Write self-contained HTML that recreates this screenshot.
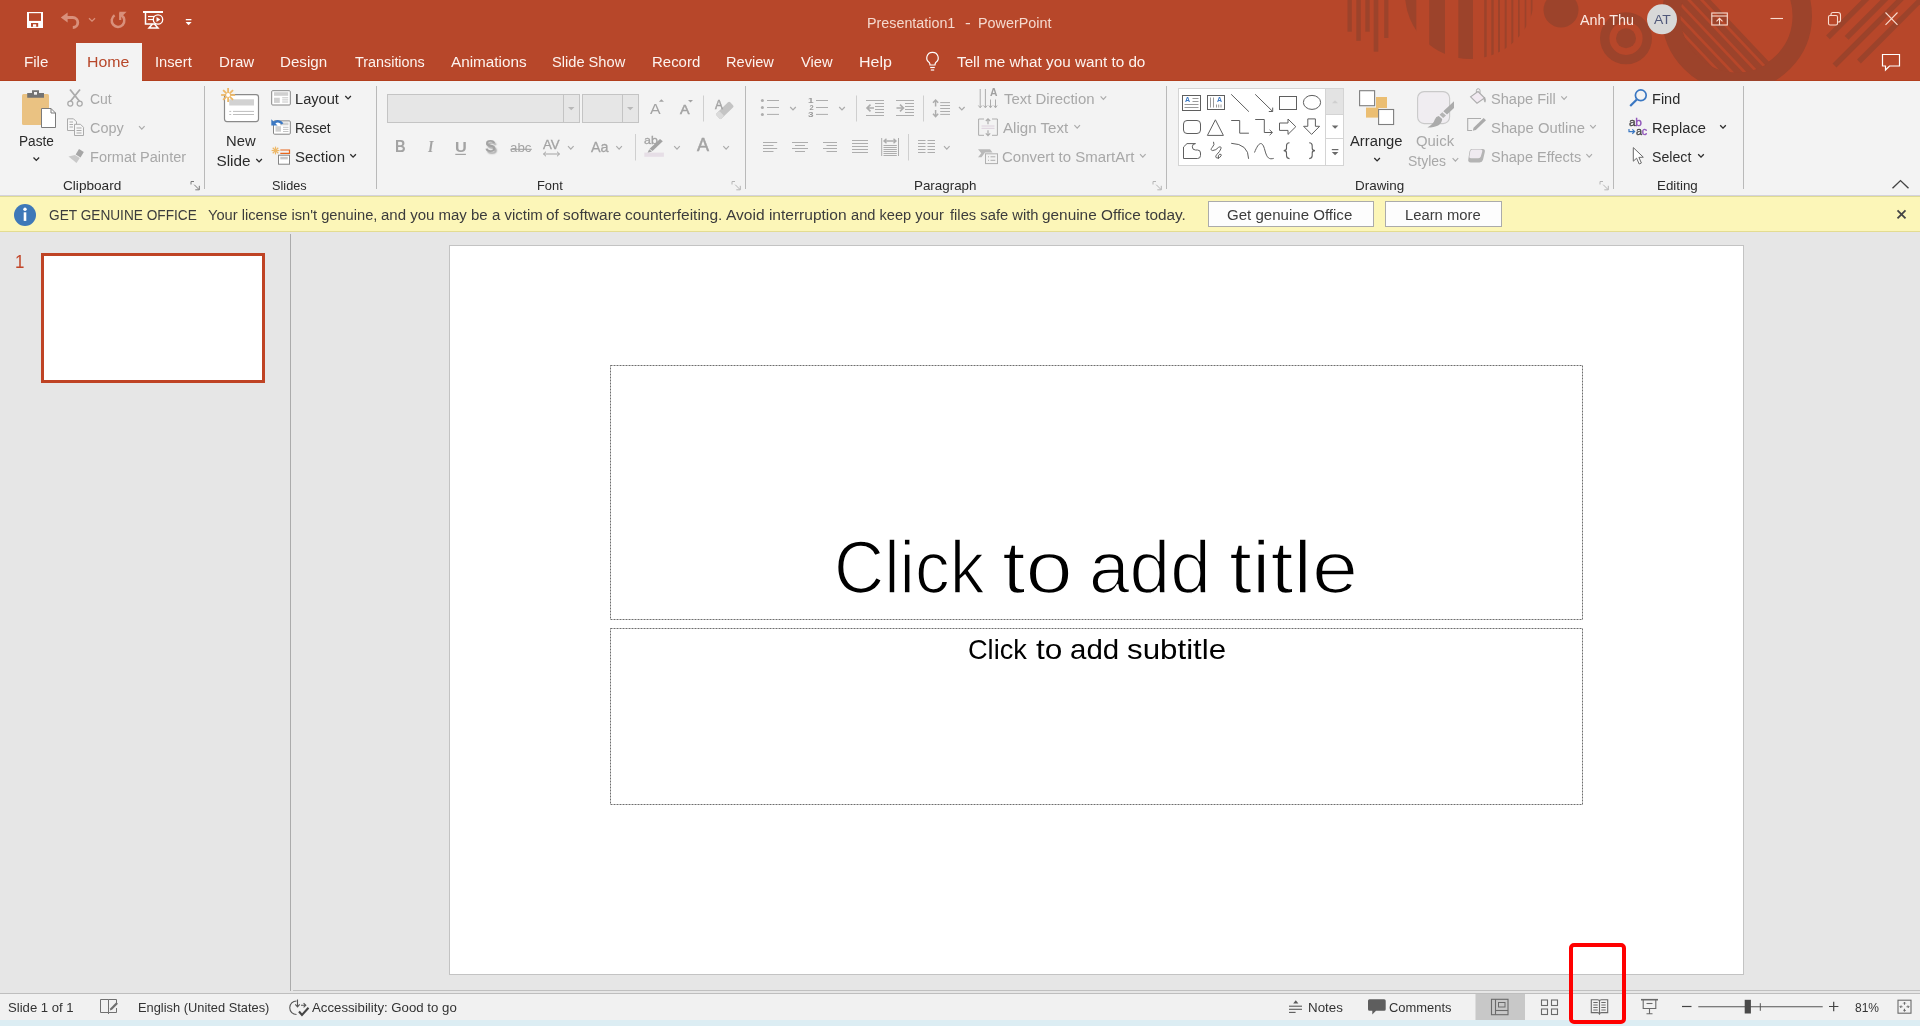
<!DOCTYPE html>
<html lang="en"><head><meta charset="utf-8"><title>Presentation1 - PowerPoint</title>
<style>
html,body{margin:0;padding:0;}
body{width:1920px;height:1026px;overflow:hidden;position:relative;background:#E6E6E6;font-family:'Liberation Sans',sans-serif;}
.b{position:absolute;}
.t{position:absolute;white-space:pre;}
svg.ov{position:absolute;left:0;top:0;}
.tx{position:absolute;left:0;top:0;width:1920px;height:1026px;will-change:transform;}
</style></head><body>
<div class="b" style="left:0px;top:0px;width:1920px;height:81px;background:#B7472A;"></div>
<div class="b" style="left:0px;top:80px;width:1920px;height:1px;background:#B23F1E;"></div>
<div class="b" style="left:0px;top:81px;width:1920px;height:114px;background:#F3F3F3;"></div>
<div class="b" style="left:76px;top:43px;width:66px;height:40px;background:#F3F3F3;"></div>
<div class="b" style="left:0px;top:195px;width:1920px;height:1px;background:#D5D3DC;"></div>
<div class="b" style="left:0px;top:196px;width:1920px;height:1px;background:#DEDA94;"></div>
<div class="b" style="left:0px;top:197px;width:1920px;height:35px;background:#FCF6B8;"></div>
<div class="b" style="left:0px;top:231px;width:1920px;height:1px;background:#E3DC92;"></div>
<div class="b" style="left:0px;top:232px;width:1920px;height:762px;background:#E6E6E6;"></div>
<div class="b" style="left:290px;top:234px;width:1px;height:757px;background:#ABABAB;"></div>
<div class="b" style="left:293px;top:990px;width:1627px;height:1px;background:#C0C0C0;"></div>
<div class="b" style="left:0px;top:993px;width:1920px;height:1px;background:#BEBEBE;"></div>
<div class="b" style="left:0px;top:994px;width:1920px;height:26px;background:#F1F1F1;"></div>
<div class="b" style="left:0px;top:1020px;width:1920px;height:6px;background:#DCEDF3;"></div>
<div class="b" style="left:41px;top:253px;width:218px;height:124px;background:#FFFFFF;border:3px solid #BF4324;"></div>
<div class="b" style="left:449px;top:245px;width:1293px;height:728px;background:#FFFFFF;border:1px solid #C3C3C3;"></div>

<svg class="ov" width="1920" height="1026" viewBox="0 0 1920 1026">
<defs><clipPath id="cT"><rect x="0" y="0" width="1920" height="81"/></clipPath><clipPath id="cSemi"><circle cx="1470" cy="-6" r="65"/></clipPath><clipPath id="cIn"><circle cx="1737" cy="16" r="56.5"/></clipPath></defs>
<g clip-path="url(#cT)" fill="#9C432B">
<rect x="1347.5" y="0" width="4.3" height="31.7" fill="#9C432B" stroke="none" stroke-width="1" rx="0"/>
<rect x="1356.3" y="0" width="4.5" height="40.8" fill="#9C432B" stroke="none" stroke-width="1" rx="0"/>
<rect x="1365.3" y="0" width="4.4" height="31.7" fill="#9C432B" stroke="none" stroke-width="1" rx="0"/>
<rect x="1373.7" y="0" width="4.6" height="51.7" fill="#9C432B" stroke="none" stroke-width="1" rx="0"/>
<rect x="1384.2" y="0" width="4.2" height="38" fill="#9C432B" stroke="none" stroke-width="1" rx="0"/>
<g clip-path="url(#cSemi)">
<rect x="1400" y="0" width="16.299999999999955" height="70" fill="#9C432B" stroke="none" stroke-width="1" rx="0"/>
<rect x="1429.2" y="0" width="15.799999999999955" height="70" fill="#9C432B" stroke="none" stroke-width="1" rx="0"/>
<rect x="1458.3" y="0" width="14.700000000000045" height="70" fill="#9C432B" stroke="none" stroke-width="1" rx="0"/>
<rect x="1484.2" y="0" width="2.5" height="70" fill="#9C432B" stroke="none" stroke-width="1" rx="0"/>
<rect x="1491.3" y="0" width="2.400000000000091" height="70" fill="#9C432B" stroke="none" stroke-width="1" rx="0"/>
<rect x="1498" y="0" width="2" height="70" fill="#9C432B" stroke="none" stroke-width="1" rx="0"/>
<rect x="1504.7" y="0" width="2.0" height="70" fill="#9C432B" stroke="none" stroke-width="1" rx="0"/>
<rect x="1511.3" y="0" width="2.0" height="70" fill="#9C432B" stroke="none" stroke-width="1" rx="0"/>
<rect x="1518" y="0" width="1.7000000000000455" height="70" fill="#9C432B" stroke="none" stroke-width="1" rx="0"/>
<rect x="1524.7" y="0" width="1.599999999999909" height="70" fill="#9C432B" stroke="none" stroke-width="1" rx="0"/>
<rect x="1530.8" y="0" width="1.7000000000000455" height="70" fill="#9C432B" stroke="none" stroke-width="1" rx="0"/>
</g>
<circle cx="1561" cy="10" r="17.5"/>
<circle cx="1626" cy="38.3" r="21.3" fill="none" stroke="#9C432B" stroke-width="9.4"/>
<circle cx="1626" cy="38.3" r="10"/>
<circle cx="1737" cy="16" r="65.25" fill="none" stroke="#9C432B" stroke-width="19.5"/>
<g clip-path="url(#cIn)">
<polygon points="1631.0,-84.2 1905.8,206.6 1760.4,343.9 1485.7,53.2"/>
<line x1="1626.4" y1="-79.8" x2="1901.1" y2="211.0" stroke="#B7472A" stroke-width="2.8"/>
<line x1="1619.7" y1="-73.4" x2="1894.4" y2="217.3" stroke="#B7472A" stroke-width="2.8"/>
<line x1="1613.0" y1="-67.1" x2="1887.7" y2="223.6" stroke="#B7472A" stroke-width="2.8"/>
<line x1="1606.3" y1="-60.8" x2="1881.1" y2="229.9" stroke="#B7472A" stroke-width="2.8"/>
<line x1="1599.6" y1="-54.5" x2="1874.4" y2="236.2" stroke="#B7472A" stroke-width="2.8"/>
<line x1="1592.9" y1="-48.2" x2="1867.7" y2="242.6" stroke="#B7472A" stroke-width="2.8"/>
</g>
<line x1="1828" y1="37.3" x2="1885.3" y2="-20" stroke="#9C432B" stroke-width="5.4"/>
<line x1="1846.6" y1="37.8" x2="1904.4" y2="-20" stroke="#9C432B" stroke-width="5.4"/>
<line x1="1834.5" y1="65.5" x2="1920" y2="-20" stroke="#9C432B" stroke-width="5.4"/>
<line x1="1859" y1="61.5" x2="1940.5" y2="-20" stroke="#9C432B" stroke-width="5.4"/>
</g>
<rect x="27" y="12" width="16" height="16" fill="#FFFFFF" stroke="none" stroke-width="1" rx="0"/>
<rect x="29" y="13.2" width="12" height="7.7" fill="#B7472A" stroke="none" stroke-width="1" rx="0"/>
<rect x="31" y="23" width="7.2" height="3.8" fill="#B7472A" stroke="none" stroke-width="1" rx="0"/>
<rect x="33" y="24.3" width="3.2" height="2.5" fill="#FFFFFF" stroke="none" stroke-width="1" rx="0"/>
<path d="M66 17.5 H72.8 A5 5 0 0 1 72.8 27.5" fill="none" stroke="#D9907B" stroke-width="2.8" />
<path d="M60.8 17.5 L67.6 12.6 V22.4 Z" fill="#D9907B" stroke="none" stroke-width="1" />
<polyline points="89,18.3 92.0,21.2 95,18.3" fill="none" stroke="#D9907B" stroke-width="1.3"/>
<path d="M121.6 15.4 A6.3 6.3 0 1 1 114.6 15.3" fill="none" stroke="#D9907B" stroke-width="2.5" />
<path d="M120.2 12.6 V20" fill="none" stroke="#D9907B" stroke-width="2.2" />
<path d="M119.2 11.8 H126.6 L121.3 17 Z" fill="#D9907B" stroke="none" stroke-width="1" />
<rect x="143" y="11" width="20" height="2" fill="#FFFFFF" stroke="none" stroke-width="1" rx="0"/>
<path d="M145.5 13 V24 H156" fill="none" stroke="#FFFFFF" stroke-width="1.5" />
<line x1="148" y1="16.5" x2="155" y2="16.5" stroke="#FFFFFF" stroke-width="1.2"/>
<line x1="148" y1="19.5" x2="153" y2="19.5" stroke="#FFFFFF" stroke-width="1.2"/>
<circle cx="158" cy="19.5" r="4.7" fill="#B7472A" stroke="#FFFFFF" stroke-width="1.3"/>
<path d="M156.5 17 L160.3 19.5 L156.5 22 Z" fill="#FFFFFF" stroke="none" stroke-width="1" />
<path d="M152.5 24 L149 28 H158 L154.5 24" fill="none" stroke="#FFFFFF" stroke-width="1.5" />
<rect x="185.8" y="19" width="5.6" height="1.3" fill="#FFFFFF" stroke="none" stroke-width="1" rx="0"/>
<path d="M185.6 22 H191.6 L188.6 25.2 Z" fill="#FFFFFF" stroke="none" stroke-width="1" />
<circle cx="1662" cy="19.3" r="15" fill="#D8D8D8"/>
<rect x="1711.8" y="13" width="15.5" height="12" fill="none" stroke="#F9DCD0" stroke-width="1.1" rx="0"/>
<line x1="1711.8" y1="16" x2="1727.3" y2="16" stroke="#F9DCD0" stroke-width="1.1"/>
<path d="M1719.5 25 V18.5 M1716.5 21.3 L1719.5 18.3 L1722.5 21.3" fill="none" stroke="#F9DCD0" stroke-width="1.1" />
<line x1="1770.5" y1="18.5" x2="1783" y2="18.5" stroke="#F9DCD0" stroke-width="1.1"/>
<rect x="1828.5" y="15.5" width="9" height="9.5" fill="none" stroke="#F9DCD0" stroke-width="1.1" rx="1.5"/>
<path d="M1831 15.5 V14.5 a2 2 0 0 1 2 -2 H1838 a2.5 2.5 0 0 1 2.5 2.5 V20 a2 2 0 0 1 -2 2 H1837.5" fill="none" stroke="#F9DCD0" stroke-width="1.1" />
<path d="M1885.5 12.5 L1897.5 24.8 M1897.5 12.5 L1885.5 24.8" fill="none" stroke="#F9DCD0" stroke-width="1.1" />
<path d="M1882.5 54.5 H1899.5 V66 H1889.5 L1885.5 70 V66 H1882.5 Z" fill="none" stroke="#FFFFFF" stroke-width="1.2" />
<path d="M932.5 52.3 a5.6 5.6 0 0 1 3.3 10.2 q-0.8 0.8 -0.8 2.5 h-5 q0 -1.7 -0.8 -2.5 a5.6 5.6 0 0 1 3.3 -10.2 Z" fill="none" stroke="#FFFFFF" stroke-width="1.2" />
<line x1="930.2" y1="67.5" x2="934.8" y2="67.5" stroke="#FFFFFF" stroke-width="1.2"/>
<line x1="930.8" y1="70" x2="934.2" y2="70" stroke="#FFFFFF" stroke-width="1.2"/>
<line x1="204.5" y1="86" x2="204.5" y2="189" stroke="#B9B9B9" stroke-width="1"/>
<line x1="376.5" y1="86" x2="376.5" y2="189" stroke="#B9B9B9" stroke-width="1"/>
<line x1="745.5" y1="86" x2="745.5" y2="189" stroke="#B9B9B9" stroke-width="1"/>
<line x1="1166.5" y1="86" x2="1166.5" y2="189" stroke="#B9B9B9" stroke-width="1"/>
<line x1="1613.5" y1="86" x2="1613.5" y2="189" stroke="#B9B9B9" stroke-width="1"/>
<line x1="1743.5" y1="86" x2="1743.5" y2="189" stroke="#B9B9B9" stroke-width="1"/>
<line x1="703.5" y1="95.5" x2="703.5" y2="121.5" stroke="#CFCFCF" stroke-width="1"/>
<line x1="635.5" y1="134" x2="635.5" y2="160.5" stroke="#CFCFCF" stroke-width="1"/>
<line x1="856.5" y1="95.5" x2="856.5" y2="121.5" stroke="#CFCFCF" stroke-width="1"/>
<line x1="923.5" y1="95.5" x2="923.5" y2="121.5" stroke="#CFCFCF" stroke-width="1"/>
<line x1="908.5" y1="134" x2="908.5" y2="160.5" stroke="#CFCFCF" stroke-width="1"/>
<path d="M191 184.5 V181.5 H194" fill="none" stroke="#7A7A7A" stroke-width="1" />
<path d="M194.2 184.7 L199 189.5 M199.3 185.8 V189.8 H195.3" fill="none" stroke="#7A7A7A" stroke-width="1" />
<path d="M732 184.5 V181.5 H735" fill="none" stroke="#B5B5B5" stroke-width="1" />
<path d="M735.2 184.7 L740 189.5 M740.3 185.8 V189.8 H736.3" fill="none" stroke="#B5B5B5" stroke-width="1" />
<path d="M1153 184.5 V181.5 H1156" fill="none" stroke="#B5B5B5" stroke-width="1" />
<path d="M1156.2 184.7 L1161 189.5 M1161.3 185.8 V189.8 H1157.3" fill="none" stroke="#B5B5B5" stroke-width="1" />
<path d="M1600 184.5 V181.5 H1603" fill="none" stroke="#B5B5B5" stroke-width="1" />
<path d="M1603.2 184.7 L1608 189.5 M1608.3 185.8 V189.8 H1604.3" fill="none" stroke="#B5B5B5" stroke-width="1" />
<rect x="22" y="94" width="27" height="31" fill="#EAC282" stroke="none" stroke-width="1" rx="1.5"/>
<path d="M27.2 93 H32 V90.2 H39 V93 H44 V97.7 H27.2 Z" fill="#737373" stroke="none" stroke-width="1" />
<rect x="34" y="92" width="3" height="2.7" fill="#F3F3F3" stroke="none" stroke-width="1" rx="0"/>
<path d="M41.5 108.5 H51 L55.5 113 V127.5 H41.5 Z" fill="#FFFFFF" stroke="#7B7B7B" stroke-width="1" />
<path d="M51 108.5 V113 H55.5" fill="none" stroke="#7B7B7B" stroke-width="1" />
<polyline points="33.5,157.5 36.3,160.4 39.1,157.5" fill="none" stroke="#2B2B2B" stroke-width="1.3"/>
<path d="M70 89.5 L79.5 101.2 M80 89.5 L70.5 101.2" fill="none" stroke="#ABABAB" stroke-width="1.8" />
<circle cx="70.3" cy="103.6" r="2.5" fill="none" stroke="#ABABAB" stroke-width="1.3"/>
<circle cx="79.7" cy="103.6" r="2.5" fill="none" stroke="#ABABAB" stroke-width="1.3"/>
<path d="M67.5 118.8 H73.5 L76.5 121.8 V130.5 H67.5 Z" fill="#F6F6F6" stroke="#ABABAB" stroke-width="1" />
<path d="M74.5 124.3 H80.5 L83.5 127.3 V135.5 H74.5 Z" fill="#F6F6F6" stroke="#ABABAB" stroke-width="1" />
<line x1="69.5" y1="122" x2="73" y2="122" stroke="#ABABAB" stroke-width="1"/>
<line x1="69.5" y1="124.5" x2="73" y2="124.5" stroke="#ABABAB" stroke-width="1"/>
<line x1="69.5" y1="127" x2="73" y2="127" stroke="#ABABAB" stroke-width="1"/>
<line x1="76.5" y1="128" x2="81.5" y2="128" stroke="#ABABAB" stroke-width="1"/>
<line x1="76.5" y1="130.5" x2="81.5" y2="130.5" stroke="#ABABAB" stroke-width="1"/>
<line x1="76.5" y1="133" x2="81.5" y2="133" stroke="#ABABAB" stroke-width="1"/>
<polyline points="139,126.2 141.8,129.1 144.6,126.2" fill="none" stroke="#ABABAB" stroke-width="1.2"/>
<path d="M79 149 L83.8 152 L80.5 157.5 L75.7 154.5 Z" fill="#A6A6A6" stroke="none" stroke-width="1" />
<path d="M75 155 L79.8 158 L76.5 163 L68.5 156.5 Z" fill="#C9C9C9" stroke="none" stroke-width="1" />
<rect x="224.5" y="94.6" width="34" height="27" fill="#FFFFFF" stroke="#8A8A8A" stroke-width="1.2" rx="2.5"/>
<rect x="229.2" y="99.3" width="24.8" height="6.2" fill="#D2D2D2" stroke="none" stroke-width="1" rx="0"/>
<line x1="233" y1="111.4" x2="254" y2="111.4" stroke="#BDBDBD" stroke-width="1"/>
<line x1="229.3" y1="111.4" x2="231.2" y2="111.4" stroke="#BDBDBD" stroke-width="1"/>
<line x1="233" y1="114.5" x2="254" y2="114.5" stroke="#BDBDBD" stroke-width="1"/>
<line x1="229.3" y1="114.5" x2="231.2" y2="114.5" stroke="#BDBDBD" stroke-width="1"/>
<line x1="221.10" y1="95.00" x2="235.10" y2="95.00" stroke="#EDB868" stroke-width="1.8"/>
<line x1="223.15" y1="90.05" x2="233.05" y2="99.95" stroke="#EDB868" stroke-width="1.8"/>
<line x1="228.10" y1="88.00" x2="228.10" y2="102.00" stroke="#EDB868" stroke-width="1.8"/>
<line x1="233.05" y1="90.05" x2="223.15" y2="99.95" stroke="#EDB868" stroke-width="1.8"/>
<circle cx="228.1" cy="95" r="2" fill="#FFFFFF"/>
<polyline points="256.3,159 259.1,161.9 261.90000000000003,159" fill="none" stroke="#2B2B2B" stroke-width="1.3"/>
<rect x="271.7" y="90.7" width="18.6" height="14.3" fill="#FFFFFF" stroke="#858585" stroke-width="1" rx="1"/>
<rect x="274" y="92.2" width="14.2" height="3.6" fill="#D0D0D0" stroke="none" stroke-width="1" rx="0"/>
<rect x="274" y="97.7" width="5.8" height="5.2" fill="#D0D0D0" stroke="none" stroke-width="1" rx="0"/>
<line x1="282.2" y1="97.8" x2="288.2" y2="97.8" stroke="#C4C4C4" stroke-width="1"/>
<line x1="282.2" y1="99.9" x2="288.2" y2="99.9" stroke="#C4C4C4" stroke-width="1"/>
<line x1="282.2" y1="102" x2="288.2" y2="102" stroke="#C4C4C4" stroke-width="1"/>
<polyline points="345.3,96 348.1,98.9 350.90000000000003,96" fill="none" stroke="#2B2B2B" stroke-width="1.3"/>
<rect x="273.5" y="120.9" width="16.8" height="13.3" fill="#FFFFFF" stroke="#858585" stroke-width="1" rx="1"/>
<rect x="275.5" y="126.2" width="5.5" height="5.5" fill="#D0D0D0" stroke="none" stroke-width="1" rx="0"/>
<rect x="280" y="122.5" width="8.5" height="2.8" fill="#D0D0D0" stroke="none" stroke-width="1" rx="0"/>
<line x1="283" y1="127.3" x2="288.5" y2="127.3" stroke="#C4C4C4" stroke-width="1"/>
<line x1="283" y1="129.4" x2="288.5" y2="129.4" stroke="#C4C4C4" stroke-width="1"/>
<line x1="283" y1="131.5" x2="288.5" y2="131.5" stroke="#C4C4C4" stroke-width="1"/>
<path d="M271.3 119.3 L271.3 125.6 L277.6 125.6 L275.4 123.4 A4.3 4.3 0 0 1 281.6 124.6 L283.4 123.2 A6.6 6.6 0 0 0 273.6 121.6 Z" fill="#3B78C3" stroke="none" stroke-width="1" />
<line x1="271.60" y1="150.50" x2="279.40" y2="150.50" stroke="#EDB868" stroke-width="1.2"/>
<line x1="272.74" y1="147.74" x2="278.26" y2="153.26" stroke="#EDB868" stroke-width="1.2"/>
<line x1="275.50" y1="146.60" x2="275.50" y2="154.40" stroke="#EDB868" stroke-width="1.2"/>
<line x1="278.26" y1="147.74" x2="272.74" y2="153.26" stroke="#EDB868" stroke-width="1.2"/>
<path d="M280.3 150 H289.5 V153.4 H280.3" fill="none" stroke="#E8671C" stroke-width="1.2" />
<rect x="278.5" y="155.2" width="11" height="9" fill="#FFFFFF" stroke="#858585" stroke-width="1" rx="0"/>
<rect x="280.3" y="156.8" width="7.5" height="2.6" fill="#C8C8C8" stroke="none" stroke-width="1" rx="0"/>
<polyline points="350.3,154.2 353.1,157.1 355.90000000000003,154.2" fill="none" stroke="#2B2B2B" stroke-width="1.3"/>
<rect x="387.5" y="94.5" width="192" height="28" fill="#E6E6E6" stroke="#C4C4C4" stroke-width="1" rx="0"/>
<line x1="563.5" y1="94.5" x2="563.5" y2="122.5" stroke="#C4C4C4" stroke-width="1"/>
<path d="M568 107 H574.5 L571.25 110.3 Z" fill="#B8B8B8" stroke="none" stroke-width="1" />
<rect x="582.5" y="94.5" width="56" height="28" fill="#E6E6E6" stroke="#C4C4C4" stroke-width="1" rx="0"/>
<line x1="622.5" y1="94.5" x2="622.5" y2="122.5" stroke="#C4C4C4" stroke-width="1"/>
<path d="M627 107 H633.5 L630.25 110.3 Z" fill="#B8B8B8" stroke="none" stroke-width="1" />
<path d="M658.9 101.8 L661.4 99.2 L664 101.8 Z" fill="#A3A3A3" stroke="none" stroke-width="1" />
<path d="M688 100 H693 L690.5 102.6 Z" fill="#A3A3A3" stroke="none" stroke-width="1" />
<g transform="translate(724.8,110.4) rotate(-44)"><rect x="-9.5" y="-3.6" width="19" height="7.2" rx="1.6" fill="#C4C4C4"/><rect x="-9.5" y="-3.6" width="5.2" height="7.2" rx="1.2" fill="#DADADA"/></g>
<line x1="455.3" y1="154.4" x2="465.9" y2="154.4" stroke="#A3A3A3" stroke-width="1.2"/>
<line x1="510.5" y1="149.3" x2="531.8" y2="149.3" stroke="#A3A3A3" stroke-width="1.1"/>
<path d="M543.5 154 H559.5 M546 151.7 L543.5 154 L546 156.3 M557 151.7 L559.5 154 L557 156.3" fill="none" stroke="#A3A3A3" stroke-width="1" />
<polyline points="568,146.2 570.8,149.1 573.6,146.2" fill="none" stroke="#ABABAB" stroke-width="1.2"/>
<polyline points="616.3,146.2 619.0999999999999,149.1 621.9,146.2" fill="none" stroke="#ABABAB" stroke-width="1.2"/>
<path d="M660 139 L662.8 141.3 L652.5 151 L649.6 148.8 Z" fill="#A3A3A3" stroke="none" stroke-width="1" />
<path d="M649.2 149.3 L652 151.5 L647.5 153 Z" fill="#A3A3A3" stroke="none" stroke-width="1" />
<rect x="644.3" y="152.6" width="19.6" height="4.2" fill="#E6DEE6" stroke="none" stroke-width="1" rx="0"/>
<polyline points="674.2,146.2 677.0,149.1 679.8000000000001,146.2" fill="none" stroke="#ABABAB" stroke-width="1.2"/>
<polyline points="723.3,146.2 726.0999999999999,149.1 728.9,146.2" fill="none" stroke="#ABABAB" stroke-width="1.2"/>
<circle cx="762.4" cy="100.5" r="1.5" fill="#ADADAD"/>
<line x1="767" y1="100.5" x2="779" y2="100.5" stroke="#ADADAD" stroke-width="1"/>
<circle cx="762.4" cy="107.5" r="1.5" fill="#ADADAD"/>
<line x1="767" y1="107.5" x2="779" y2="107.5" stroke="#ADADAD" stroke-width="1"/>
<circle cx="762.4" cy="114.4" r="1.5" fill="#ADADAD"/>
<line x1="767" y1="114.4" x2="779" y2="114.4" stroke="#ADADAD" stroke-width="1"/>
<polyline points="790.2,107 793.0,109.9 795.8000000000001,107" fill="none" stroke="#ABABAB" stroke-width="1.2"/>
<line x1="816" y1="100.5" x2="828" y2="100.5" stroke="#ADADAD" stroke-width="1"/>
<line x1="816" y1="107.5" x2="828" y2="107.5" stroke="#ADADAD" stroke-width="1"/>
<line x1="816" y1="114.4" x2="828" y2="114.4" stroke="#ADADAD" stroke-width="1"/>
<polyline points="839.2,107 842.0,109.9 844.8000000000001,107" fill="none" stroke="#ABABAB" stroke-width="1.2"/>
<line x1="866" y1="100.5" x2="884" y2="100.5" stroke="#ADADAD" stroke-width="1"/>
<line x1="875" y1="103.5" x2="884" y2="103.5" stroke="#ADADAD" stroke-width="1"/>
<line x1="875" y1="106.5" x2="884" y2="106.5" stroke="#ADADAD" stroke-width="1"/>
<line x1="875" y1="109.5" x2="884" y2="109.5" stroke="#ADADAD" stroke-width="1"/>
<line x1="875" y1="112.5" x2="884" y2="112.5" stroke="#ADADAD" stroke-width="1"/>
<line x1="866" y1="115.5" x2="884" y2="115.5" stroke="#ADADAD" stroke-width="1"/>
<path d="M874 108 H867.5 M870.5 104.6 L867 108 L870.5 111.4" fill="none" stroke="#ADADAD" stroke-width="1.6" />
<line x1="896" y1="100.5" x2="914" y2="100.5" stroke="#ADADAD" stroke-width="1"/>
<line x1="905" y1="103.5" x2="914" y2="103.5" stroke="#ADADAD" stroke-width="1"/>
<line x1="905" y1="106.5" x2="914" y2="106.5" stroke="#ADADAD" stroke-width="1"/>
<line x1="905" y1="109.5" x2="914" y2="109.5" stroke="#ADADAD" stroke-width="1"/>
<line x1="905" y1="112.5" x2="914" y2="112.5" stroke="#ADADAD" stroke-width="1"/>
<line x1="896" y1="115.5" x2="914" y2="115.5" stroke="#ADADAD" stroke-width="1"/>
<path d="M896.5 108 H903 M900 104.6 L903.5 108 L900 111.4" fill="none" stroke="#ADADAD" stroke-width="1.6" />
<line x1="940.2" y1="102.6" x2="950" y2="102.6" stroke="#ADADAD" stroke-width="1"/>
<line x1="940.2" y1="105.5" x2="950" y2="105.5" stroke="#ADADAD" stroke-width="1"/>
<line x1="940.2" y1="108.5" x2="950" y2="108.5" stroke="#ADADAD" stroke-width="1"/>
<line x1="940.2" y1="111.5" x2="950" y2="111.5" stroke="#ADADAD" stroke-width="1"/>
<line x1="940.2" y1="114.4" x2="950" y2="114.4" stroke="#ADADAD" stroke-width="1"/>
<path d="M935.6 100 V106.5 M933 102.8 L935.6 100 L938.2 102.8 M935.6 110 V116.5 M933 113.8 L935.6 116.6 L938.2 113.8" fill="none" stroke="#ADADAD" stroke-width="1.5" />
<polyline points="959,107 961.8,109.9 964.6,107" fill="none" stroke="#ABABAB" stroke-width="1.2"/>
<path d="M980.2 89 V107.5 M978.4 105.5 L980.2 107.8 L982 105.5 M985.4 89 V107.5 M983.6 105.5 L985.4 107.8 L987.2 105.5" fill="none" stroke="#ADADAD" stroke-width="1" />
<path d="M990.5 99.5 V107.5 M988.9 105.5 L990.5 107.8 L992.1 105.5 M995.5 99.5 V107.5 M993.9 105.5 L995.5 107.8 L997.1 105.5" fill="none" stroke="#ADADAD" stroke-width="1" />
<polyline points="1100.6,96.4 1103.3999999999999,99.30000000000001 1106.1999999999998,96.4" fill="none" stroke="#ABABAB" stroke-width="1.2"/>
<path d="M984 119 H978.6 V135.3 H984 M992 119 H997.4 V135.3 H992" fill="none" stroke="#ADADAD" stroke-width="1" />
<path d="M988 118.8 V124.3 M985.8 121 L988 118.8 L990.2 121 M988 135.6 V130.2 M985.8 133.4 L988 135.6 L990.2 133.4" fill="none" stroke="#ADADAD" stroke-width="1.2" />
<line x1="981.5" y1="126" x2="994.5" y2="126" stroke="#DDD0DD" stroke-width="1"/>
<line x1="981.5" y1="128.3" x2="994.5" y2="128.3" stroke="#DDD0DD" stroke-width="1"/>
<polyline points="1074.4,125.2 1077.2,128.1 1080.0,125.2" fill="none" stroke="#ABABAB" stroke-width="1.2"/>
<path d="M978 149.3 H990 L992.5 152.5 H985 L981.5 157.3 H978 L981.3 153.2 Z" fill="#B9B9B9" stroke="none" stroke-width="1" />
<rect x="985.5" y="153.8" width="12" height="9.8" fill="#F3F3F3" stroke="#B0B0B0" stroke-width="1" rx="0"/>
<line x1="988" y1="156.8" x2="989" y2="156.8" stroke="#ADADAD" stroke-width="1"/>
<line x1="990.5" y1="156.8" x2="995.3" y2="156.8" stroke="#ADADAD" stroke-width="1"/>
<line x1="988" y1="160.3" x2="989" y2="160.3" stroke="#ADADAD" stroke-width="1"/>
<line x1="990.5" y1="160.3" x2="995.3" y2="160.3" stroke="#ADADAD" stroke-width="1"/>
<polyline points="1140,154.2 1142.8,157.1 1145.6,154.2" fill="none" stroke="#ABABAB" stroke-width="1.2"/>
<line x1="763" y1="142.5" x2="777.2" y2="142.5" stroke="#ADADAD" stroke-width="1"/>
<line x1="792" y1="142.5" x2="808" y2="142.5" stroke="#ADADAD" stroke-width="1"/>
<line x1="823" y1="142.5" x2="837" y2="142.5" stroke="#ADADAD" stroke-width="1"/>
<line x1="763" y1="145.5" x2="773.5" y2="145.5" stroke="#ADADAD" stroke-width="1"/>
<line x1="795" y1="145.5" x2="805" y2="145.5" stroke="#ADADAD" stroke-width="1"/>
<line x1="826.5" y1="145.5" x2="837" y2="145.5" stroke="#ADADAD" stroke-width="1"/>
<line x1="763" y1="148.5" x2="777.2" y2="148.5" stroke="#ADADAD" stroke-width="1"/>
<line x1="792" y1="148.5" x2="808" y2="148.5" stroke="#ADADAD" stroke-width="1"/>
<line x1="823" y1="148.5" x2="837" y2="148.5" stroke="#ADADAD" stroke-width="1"/>
<line x1="763" y1="151.5" x2="773.5" y2="151.5" stroke="#ADADAD" stroke-width="1"/>
<line x1="795" y1="151.5" x2="805" y2="151.5" stroke="#ADADAD" stroke-width="1"/>
<line x1="826.5" y1="151.5" x2="837" y2="151.5" stroke="#ADADAD" stroke-width="1"/>
<line x1="852" y1="140.5" x2="868" y2="140.5" stroke="#ADADAD" stroke-width="1"/>
<line x1="852" y1="143.5" x2="868" y2="143.5" stroke="#ADADAD" stroke-width="1"/>
<line x1="852" y1="146.5" x2="868" y2="146.5" stroke="#ADADAD" stroke-width="1"/>
<line x1="852" y1="149.5" x2="868" y2="149.5" stroke="#ADADAD" stroke-width="1"/>
<line x1="852" y1="152.5" x2="868" y2="152.5" stroke="#ADADAD" stroke-width="1"/>
<line x1="881.7" y1="138" x2="881.7" y2="156" stroke="#ADADAD" stroke-width="1"/>
<line x1="898.5" y1="138" x2="898.5" y2="156" stroke="#ADADAD" stroke-width="1"/>
<path d="M884 141 H896 M886.5 138.7 L884 141 L886.5 143.3 M893.5 138.7 L896 141 L893.5 143.3" fill="none" stroke="#ADADAD" stroke-width="1.4" />
<line x1="883.5" y1="145.5" x2="896.8" y2="145.5" stroke="#ADADAD" stroke-width="1"/>
<line x1="883.5" y1="147.5" x2="896.8" y2="147.5" stroke="#ADADAD" stroke-width="1"/>
<line x1="883.5" y1="149.5" x2="896.8" y2="149.5" stroke="#ADADAD" stroke-width="1"/>
<line x1="883.5" y1="151.5" x2="896.8" y2="151.5" stroke="#ADADAD" stroke-width="1"/>
<line x1="883.5" y1="153.5" x2="896.8" y2="153.5" stroke="#ADADAD" stroke-width="1"/>
<line x1="883.5" y1="155.5" x2="896.8" y2="155.5" stroke="#ADADAD" stroke-width="1"/>
<line x1="918" y1="140.5" x2="925.5" y2="140.5" stroke="#ADADAD" stroke-width="1"/>
<line x1="927.5" y1="140.5" x2="935" y2="140.5" stroke="#ADADAD" stroke-width="1"/>
<line x1="918" y1="143.5" x2="925.5" y2="143.5" stroke="#ADADAD" stroke-width="1"/>
<line x1="927.5" y1="143.5" x2="935" y2="143.5" stroke="#ADADAD" stroke-width="1"/>
<line x1="918" y1="146.5" x2="925.5" y2="146.5" stroke="#ADADAD" stroke-width="1"/>
<line x1="927.5" y1="146.5" x2="935" y2="146.5" stroke="#ADADAD" stroke-width="1"/>
<line x1="918" y1="149.5" x2="925.5" y2="149.5" stroke="#ADADAD" stroke-width="1"/>
<line x1="927.5" y1="149.5" x2="935" y2="149.5" stroke="#ADADAD" stroke-width="1"/>
<line x1="918" y1="152.5" x2="925.5" y2="152.5" stroke="#ADADAD" stroke-width="1"/>
<line x1="927.5" y1="152.5" x2="935" y2="152.5" stroke="#ADADAD" stroke-width="1"/>
<polyline points="944,146.2 946.8,149.1 949.6,146.2" fill="none" stroke="#ABABAB" stroke-width="1.2"/>
<rect x="1178.5" y="88.5" width="165" height="77" fill="#FFFFFF" stroke="#D4D4D4" stroke-width="1" rx="0"/>
<rect x="1326" y="89" width="17" height="25.5" fill="#E3E3E3" stroke="none" stroke-width="1" rx="0"/>
<line x1="1325.5" y1="88.5" x2="1325.5" y2="165.5" stroke="#D4D4D4" stroke-width="1"/>
<line x1="1325.5" y1="114.5" x2="1343.5" y2="114.5" stroke="#D4D4D4" stroke-width="1"/>
<line x1="1325.5" y1="138.5" x2="1343.5" y2="138.5" stroke="#D4D4D4" stroke-width="1"/>
<path d="M1332 103.3 L1335 100.3 L1338 103.3 Z" fill="#CFCFCF" stroke="none" stroke-width="1" />
<path d="M1331.8 125.5 H1338.4 L1335.1 128.8 Z" fill="#6A6A6A" stroke="none" stroke-width="1" />
<line x1="1331.8" y1="149.6" x2="1338.4" y2="149.6" stroke="#6A6A6A" stroke-width="1.2"/>
<path d="M1331.8 152 H1338.4 L1335.1 155.3 Z" fill="#6A6A6A" stroke="none" stroke-width="1" />
<rect x="1182.5" y="95.5" width="18" height="15" fill="none" stroke="#5F5F5F" stroke-width="1" rx="0"/>
<line x1="1192.5" y1="98.5" x2="1198.5" y2="98.5" stroke="#9A9A9A" stroke-width="1"/>
<line x1="1192.5" y1="101.5" x2="1198.5" y2="101.5" stroke="#9A9A9A" stroke-width="1"/>
<line x1="1184.5" y1="104.5" x2="1198.5" y2="104.5" stroke="#9A9A9A" stroke-width="1"/>
<line x1="1184.5" y1="107.5" x2="1198.5" y2="107.5" stroke="#9A9A9A" stroke-width="1"/>
<rect x="1207.5" y="95.5" width="17" height="14" fill="none" stroke="#5F5F5F" stroke-width="1" rx="0"/>
<line x1="1210.5" y1="97.5" x2="1210.5" y2="107.5" stroke="#9A9A9A" stroke-width="1"/>
<line x1="1213.5" y1="97.5" x2="1213.5" y2="107.5" stroke="#9A9A9A" stroke-width="1"/>
<line x1="1216.5" y1="104.5" x2="1216.5" y2="107.5" stroke="#9A9A9A" stroke-width="1"/>
<line x1="1218.7" y1="104.5" x2="1218.7" y2="107.5" stroke="#9A9A9A" stroke-width="1"/>
<line x1="1221" y1="104.5" x2="1221" y2="107.5" stroke="#9A9A9A" stroke-width="1"/>
<line x1="1231.2" y1="94.3" x2="1248.9" y2="111.7" stroke="#5F5F5F" stroke-width="1"/>
<path d="M1255.2 94.3 L1272.6 111.4 M1268.8 111.5 H1272.7 V107.6" fill="none" stroke="#5F5F5F" stroke-width="1" />
<rect x="1279.5" y="96.5" width="17" height="13" fill="none" stroke="#5F5F5F" stroke-width="1" rx="0"/>
<ellipse cx="1312" cy="102.4" rx="8.6" ry="7" fill="none" stroke="#5F5F5F" stroke-width="1"/>
<rect x="1183.5" y="120.5" width="17" height="13" fill="none" stroke="#5F5F5F" stroke-width="1" rx="3.5"/>
<path d="M1215.4 119.8 L1223.4 135.4 H1207.4 Z" fill="none" stroke="#5F5F5F" stroke-width="1" />
<path d="M1231.2 120.5 H1239.7 V133.2 H1248.9" fill="none" stroke="#5F5F5F" stroke-width="1" />
<path d="M1255.2 119.5 H1264.3 V132.5 H1272.3 M1269.6 129.8 L1272.4 132.5 L1269.6 135.2" fill="none" stroke="#5F5F5F" stroke-width="1" />
<path d="M1279.5 123 H1288 V119 L1295.8 126.7 L1288 134.4 V130.4 H1279.5 Z" fill="none" stroke="#5F5F5F" stroke-width="1" />
<path d="M1307.8 118.9 H1315.4 V126.3 H1319.6 L1311.6 134.4 L1303.6 126.3 H1307.8 Z" fill="none" stroke="#5F5F5F" stroke-width="1" />
<path d="M1187 143.6 H1195.5 a3.2 3.2 0 0 0 0 6.4 H1197.5 a3 3 0 0 1 3 3 V155.5 a3 3 0 0 1 -3 3 H1183.5 V147 Z" fill="none" stroke="#5F5F5F" stroke-width="1" />
<path d="M1213.5 141.8 q1.5 3 -1.2 5.5 q-2.5 2.8 0.3 3.3 q3.5 -0.3 6 -3.3 q3 -1.5 2.3 1.5 q-1 2.8 -4 5.6 q-2.5 3.2 0.3 3.6 q3 0 4 -2.3 q0.5 -1.8 -1.5 -1.5 q-2 0.8 -1.3 4.7" fill="none" stroke="#5F5F5F" stroke-width="1" />
<path d="M1231.2 143.3 Q1248.5 144 1248.6 158.8" fill="none" stroke="#5F5F5F" stroke-width="1" />
<path d="M1254.5 152.5 C1259 141 1262.5 141 1264.8 150 C1267 158.8 1269.5 159.5 1273.7 158.4" fill="none" stroke="#5F5F5F" stroke-width="1" />
<path d="M1289.5 142.8 q-3 0 -3 3 v2.5 q0 2.3 -2.8 2.3 q2.8 0 2.8 2.3 v2.7 q0 3 3 3" fill="none" stroke="#5F5F5F" stroke-width="1.1" />
<path d="M1309.2 142.8 q3 0 3 3 v2.5 q0 2.3 2.8 2.3 q-2.8 0 -2.8 2.3 v2.7 q0 3 -3 3" fill="none" stroke="#5F5F5F" stroke-width="1.1" />
<rect x="1376" y="97" width="11" height="11" fill="#EBBE72" stroke="none" stroke-width="1" rx="0"/>
<rect x="1366" y="107.6" width="12.5" height="10" fill="#EBBE72" stroke="none" stroke-width="1" rx="0"/>
<rect x="1359.6" y="90.7" width="15" height="15" fill="#FFFFFF" stroke="#7E7E7E" stroke-width="1.1" rx="0"/>
<rect x="1378.6" y="109.5" width="15" height="15" fill="#FFFFFF" stroke="#7E7E7E" stroke-width="1.1" rx="0"/>
<polyline points="1374.3,158 1377.1,160.9 1379.8999999999999,158" fill="none" stroke="#2B2B2B" stroke-width="1.3"/>
<rect x="1417.6" y="91.6" width="32" height="32" fill="#F0EDF1" stroke="#C9C9C9" stroke-width="1.1" rx="6.5"/>
<path d="M1454 101.2 L1454 108 L1447 114.5 L1443.3 111.2 Z" fill="#ABABAB" stroke="none" stroke-width="1" />
<path d="M1442.3 112.3 L1446 115.5 L1443.2 118 L1439.6 114.8 Z" fill="#B4B4B4" stroke="none" stroke-width="1" />
<path d="M1438.8 116 L1442.2 119 Q1441.5 127.5 1427.3 127.6 Q1433.5 124 1434.8 119.5 Q1436 116.3 1438.8 116 Z" fill="#ABABAB" stroke="none" stroke-width="1" />
<polyline points="1452.6,158.2 1455.3999999999999,161.1 1458.1999999999998,158.2" fill="none" stroke="#ABABAB" stroke-width="1.2"/>
<path d="M1478 91.5 L1484.6 98 L1477 103.2 L1470.6 96.8 Z" fill="#F1EAF1" stroke="#ADADAD" stroke-width="1.1" />
<path d="M1476.4 92.8 V90.5 a1.8 1.8 0 0 1 3.6 0 V93.5" fill="none" stroke="#ADADAD" stroke-width="1" />
<path d="M1484.4 97 q1.8 2.6 0.6 5.2 q-1.6 -2 -0.6 -5.2 Z" fill="#ADADAD" stroke="#ADADAD" stroke-width="0.8" />
<polyline points="1561.3,96.4 1564.1,99.30000000000001 1566.8999999999999,96.4" fill="none" stroke="#ABABAB" stroke-width="1.2"/>
<path d="M1481 118.5 H1467.7 V130.5 H1472" fill="none" stroke="#ADADAD" stroke-width="1.1" />
<path d="M1483.6 118 L1486 120.3 L1475.8 130 L1472.7 130.8 L1473.6 127.7 Z" fill="#ABABAB" stroke="none" stroke-width="1" />
<polyline points="1590.2,125.2 1593.0,128.1 1595.8,125.2" fill="none" stroke="#ABABAB" stroke-width="1.2"/>
<path d="M1471.5 149 H1482.5 Q1485.5 149 1484.8 152 L1483 159.8 Q1482.4 162.4 1479.5 162.4 H1470.8 Q1467.6 162.4 1468.3 159.3 L1469.5 151.5 Q1470 149 1471.5 149 Z" fill="#B4B4B4" stroke="none" stroke-width="1" />
<path d="M1472.2 149.6 H1480.5 Q1482.8 149.6 1482.2 151.8 L1480.8 156.6 Q1480.3 158.3 1478.4 158.3 H1470.8 Q1469 158.3 1469.4 156.5 L1470.3 151.3 Q1470.6 149.6 1472.2 149.6 Z" fill="#EFEAF0" stroke="none" stroke-width="1" />
<polyline points="1586.4,154.2 1589.2,157.1 1592.0,154.2" fill="none" stroke="#ABABAB" stroke-width="1.2"/>
<circle cx="1640.8" cy="95.3" r="5.4" fill="none" stroke="#3A77C2" stroke-width="1.7"/>
<line x1="1636.8" y1="99.5" x2="1630.2" y2="106" stroke="#3A77C2" stroke-width="2.2"/>
<path d="M1629 129 V131.6 H1634.3 M1632.3 129.4 L1634.6 131.6 L1632.3 133.8" fill="none" stroke="#3A77C2" stroke-width="1.2" />
<polyline points="1720.2,125.2 1723.0,128.1 1725.8,125.2" fill="none" stroke="#2B2B2B" stroke-width="1.3"/>
<path d="M1633.3 147.6 V161.2 L1636.6 158.2 L1639.2 164 L1641.4 163 L1638.9 157.4 L1643.3 157.2 Z" fill="#FFFFFF" stroke="#6A6A6A" stroke-width="1" />
<polyline points="1698.2,154.2 1701.0,157.1 1703.8,154.2" fill="none" stroke="#2B2B2B" stroke-width="1.3"/>
<path d="M1892.5 188.3 L1900.5 180.6 L1908.5 188.3" fill="none" stroke="#444" stroke-width="1.4" />
<circle cx="25" cy="215" r="11" fill="#3E78B8"/>
<circle cx="25" cy="209.3" r="1.7" fill="#FFFFFF"/>
<rect x="23.7" y="212.3" width="2.6" height="8.6" fill="#FFFFFF" stroke="none" stroke-width="1" rx="0"/>
<rect x="1208.5" y="201.5" width="165" height="25" fill="#FDFDFD" stroke="#ABABAB" stroke-width="1" rx="0"/>
<rect x="1385.5" y="201.5" width="116" height="25" fill="#FDFDFD" stroke="#ABABAB" stroke-width="1" rx="0"/>
<path d="M1897.5 210.3 L1905.5 218.3 M1905.5 210.3 L1897.5 218.3" fill="none" stroke="#444" stroke-width="1.8" />
<rect x="610.5" y="365.5" width="972" height="254" fill="none" stroke="#6E6E6E" stroke-width="1" stroke-dasharray="2 1"/>
<rect x="610.5" y="628.5" width="972" height="176" fill="none" stroke="#6E6E6E" stroke-width="1" stroke-dasharray="2 1"/>
<path d="M100.5 999.5 H108.5 V1012.5 H100.5 Z" fill="none" stroke="#707070" stroke-width="1" />
<path d="M108.5 999.5 H116.5 V1003 M116.5 1008 V1012.5 H108.5 M108.5 1012.5 V1014" fill="none" stroke="#707070" stroke-width="1" />
<path d="M116.3 1002.2 L118 1003.8 L112 1009.8 L109.8 1010.4 L110.4 1008.2 Z" fill="#707070" stroke="none" stroke-width="1" />
<path d="M296.5 1001 A6.3 6.3 0 0 0 296.5 1014.5" fill="none" stroke="#555" stroke-width="1.1" stroke-dasharray:3.2 1.6/>
<path d="M297.5 999.5 V1006.5 M295.3 1004.3 L297.5 1006.8 L299.7 1004.3" fill="none" stroke="#555" stroke-width="1.1" />
<path d="M301 1005.3 H305.5 M303.6 1003.2 L305.8 1005.3 L303.6 1007.4" fill="none" stroke="#555" stroke-width="1.1" />
<path d="M299 1011.5 L302 1015 L308.5 1007.8" fill="none" stroke="#444" stroke-width="2.1" />
<path d="M1293.2 1003.4 L1295.8 1000.2 L1298.4 1003.4 Z" fill="#5A5A5A" stroke="none" stroke-width="1" />
<line x1="1289" y1="1006.2" x2="1302" y2="1006.2" stroke="#5A5A5A" stroke-width="1.1"/>
<line x1="1289" y1="1009.3" x2="1302" y2="1009.3" stroke="#5A5A5A" stroke-width="1.1"/>
<line x1="1289" y1="1012.4" x2="1295.6" y2="1012.4" stroke="#5A5A5A" stroke-width="1.1"/>
<path d="M1369.5 999.2 H1384.2 Q1385.7 999.2 1385.7 1000.7 V1009.3 Q1385.7 1010.8 1384.2 1010.8 H1376 L1372.3 1014.5 V1010.8 H1369.5 Q1368 1010.8 1368 1009.3 V1000.7 Q1368 999.2 1369.5 999.2 Z" fill="#5E5E5E" stroke="none" stroke-width="1" />
<rect x="1475.5" y="994" width="49.5" height="26" fill="#C8C8C8" stroke="none" stroke-width="1" rx="0"/>
<rect x="1491.5" y="999.3" width="16.5" height="15.4" fill="none" stroke="#6A6A6A" stroke-width="1.1" rx="0"/>
<line x1="1495.5" y1="999.3" x2="1495.5" y2="1014.7" stroke="#6A6A6A" stroke-width="1.1"/>
<line x1="1495.5" y1="1010.5" x2="1508" y2="1010.5" stroke="#6A6A6A" stroke-width="1.1"/>
<rect x="1498.5" y="1002.5" width="6.5" height="4.5" fill="none" stroke="#6A6A6A" stroke-width="1" rx="0"/>
<rect x="1541.5" y="1000" width="6" height="5.5" fill="none" stroke="#6A6A6A" stroke-width="1.1" rx="0"/>
<rect x="1541.5" y="1009" width="6" height="5.5" fill="none" stroke="#6A6A6A" stroke-width="1.1" rx="0"/>
<rect x="1551.5" y="1000" width="6" height="5.5" fill="none" stroke="#6A6A6A" stroke-width="1.1" rx="0"/>
<rect x="1551.5" y="1009" width="6" height="5.5" fill="none" stroke="#6A6A6A" stroke-width="1.1" rx="0"/>
<path d="M1599.5 1001 V1014.8 M1591.3 999.7 H1597.5 Q1599.5 999.7 1599.5 1001.3 Q1599.5 999.7 1601.5 999.7 H1607.7 V1012.6 H1601.5 Q1599.5 1012.6 1599.5 1014 Q1599.5 1012.6 1597.5 1012.6 H1591.3 Z" fill="none" stroke="#6A6A6A" stroke-width="1.1" />
<line x1="1593.3" y1="1002.5" x2="1597.7" y2="1002.5" stroke="#6A6A6A" stroke-width="1"/>
<line x1="1601.3" y1="1002.5" x2="1605.7" y2="1002.5" stroke="#6A6A6A" stroke-width="1"/>
<line x1="1593.3" y1="1005" x2="1597.7" y2="1005" stroke="#6A6A6A" stroke-width="1"/>
<line x1="1601.3" y1="1005" x2="1605.7" y2="1005" stroke="#6A6A6A" stroke-width="1"/>
<line x1="1593.3" y1="1007.5" x2="1597.7" y2="1007.5" stroke="#6A6A6A" stroke-width="1"/>
<line x1="1601.3" y1="1007.5" x2="1605.7" y2="1007.5" stroke="#6A6A6A" stroke-width="1"/>
<line x1="1593.3" y1="1010" x2="1597.7" y2="1010" stroke="#6A6A6A" stroke-width="1"/>
<line x1="1601.3" y1="1010" x2="1605.7" y2="1010" stroke="#6A6A6A" stroke-width="1"/>
<line x1="1641" y1="999.7" x2="1658" y2="999.7" stroke="#6A6A6A" stroke-width="1.6"/>
<path d="M1643.2 1000 V1008.5 H1655.8 V1000" fill="none" stroke="#6A6A6A" stroke-width="1.1" />
<line x1="1646.5" y1="1003.5" x2="1652.5" y2="1003.5" stroke="#6A6A6A" stroke-width="1.1"/>
<path d="M1649.5 1008.5 V1013.7 M1646.5 1013.7 H1652.5" fill="none" stroke="#6A6A6A" stroke-width="1.1" />
<line x1="1682" y1="1006.5" x2="1691.5" y2="1006.5" stroke="#444" stroke-width="1.2"/>
<line x1="1698.3" y1="1006.8" x2="1822.7" y2="1006.8" stroke="#555" stroke-width="1.1"/>
<rect x="1744.7" y="999.8" width="6.2" height="13.7" fill="#4A4A4A" stroke="none" stroke-width="1" rx="0"/>
<line x1="1760.3" y1="1003.2" x2="1760.3" y2="1010.8" stroke="#555" stroke-width="1"/>
<path d="M1829 1006.5 H1838.4 M1833.7 1001.8 V1011.2" fill="none" stroke="#444" stroke-width="1.2" />
<rect x="1898" y="1000.2" width="13" height="13" fill="none" stroke="#6A6A6A" stroke-width="1.1" rx="0"/>
<path d="M1904.5 1002.3 V1004.8 M1904.5 1011.2 V1008.7 M1900 1006.7 H1902.5 M1909 1006.7 H1906.5" fill="none" stroke="#6A6A6A" stroke-width="1.1" />
<path d="M1903.2 1003.5 L1904.5 1002.2 L1905.8 1003.5 M1903.2 1010 L1904.5 1011.3 L1905.8 1010 M1901.2 1005.4 L1899.9 1006.7 L1901.2 1008 M1907.8 1005.4 L1909.1 1006.7 L1907.8 1008" fill="none" stroke="#6A6A6A" stroke-width="0.9" />
<rect x="1571" y="945" width="53" height="77" fill="none" stroke="#FF0000" stroke-width="4" rx="3"/>
</svg>
<div class="tx">
<span class="t" style="left:866.86px;top:15.05px;font-size:15.3px;line-height:15.3px;color:#F5D9CE;transform:scaleX(0.9355);transform-origin:0 0;">Presentation1</span>
<span class="t" style="left:964.88px;top:15.05px;font-size:15.3px;line-height:15.3px;color:#F5D9CE;transform:scaleX(1.1250);transform-origin:0 0;">-</span>
<span class="t" style="left:978.36px;top:15.05px;font-size:15.3px;line-height:15.3px;color:#F5D9CE;transform:scaleX(0.9403);transform-origin:0 0;">PowerPoint</span>
<span class="t" style="left:1580.00px;top:12.05px;font-size:15.3px;line-height:15.3px;color:#FBE9E2;transform:scaleX(0.9386);transform-origin:0 0;">Anh Thu</span>
<span class="t" style="left:1654.00px;top:13.17px;font-size:13.5px;line-height:13.5px;color:#50587A;transform:scaleX(1.0312);transform-origin:0 0;">AT</span>
<span class="t" style="left:24.01px;top:54.05px;font-size:15.3px;line-height:15.3px;color:#FDF3EF;transform:scaleX(0.9891);transform-origin:0 0;">File</span>
<span class="t" style="left:87.21px;top:54.05px;font-size:15.3px;line-height:15.3px;color:#B7472A;transform:scaleX(1.0385);transform-origin:0 0;">Home</span>
<span class="t" style="left:155.29px;top:54.05px;font-size:15.3px;line-height:15.3px;color:#FDF3EF;transform:scaleX(0.9595);transform-origin:0 0;">Insert</span>
<span class="t" style="left:218.51px;top:54.05px;font-size:15.3px;line-height:15.3px;color:#FDF3EF;transform:scaleX(0.9857);transform-origin:0 0;">Draw</span>
<span class="t" style="left:280.26px;top:54.05px;font-size:15.3px;line-height:15.3px;color:#FDF3EF;transform:scaleX(0.9891);transform-origin:0 0;">Design</span>
<span class="t" style="left:354.50px;top:54.05px;font-size:15.3px;line-height:15.3px;color:#FDF3EF;transform:scaleX(0.9392);transform-origin:0 0;">Transitions</span>
<span class="t" style="left:451.00px;top:54.05px;font-size:15.3px;line-height:15.3px;color:#FDF3EF;transform:scaleX(1.0000);transform-origin:0 0;">Animations</span>
<span class="t" style="left:552.34px;top:54.05px;font-size:15.3px;line-height:15.3px;color:#FDF3EF;transform:scaleX(0.9566);transform-origin:0 0;">Slide Show</span>
<span class="t" style="left:652.32px;top:54.05px;font-size:15.3px;line-height:15.3px;color:#FDF3EF;transform:scaleX(0.9787);transform-origin:0 0;">Record</span>
<span class="t" style="left:726.35px;top:54.05px;font-size:15.3px;line-height:15.3px;color:#FDF3EF;transform:scaleX(0.9531);transform-origin:0 0;">Review</span>
<span class="t" style="left:801.00px;top:54.05px;font-size:15.3px;line-height:15.3px;color:#FDF3EF;transform:scaleX(0.9606);transform-origin:0 0;">View</span>
<span class="t" style="left:859.25px;top:54.05px;font-size:15.3px;line-height:15.3px;color:#FDF3EF;transform:scaleX(1.0467);transform-origin:0 0;">Help</span>
<span class="t" style="left:956.70px;top:54.05px;font-size:15.3px;line-height:15.3px;color:#FDF3EF;transform:scaleX(0.9979);transform-origin:0 0;">Tell me what you want to do</span>
<span class="t" style="left:18.61px;top:133.05px;font-size:15.3px;line-height:15.3px;color:#2B2B2B;transform:scaleX(0.8919);transform-origin:0 0;">Paste</span>
<span class="t" style="left:89.59px;top:91.05px;font-size:15.3px;line-height:15.3px;color:#A8A8A8;transform:scaleX(0.9130);transform-origin:0 0;">Cut</span>
<span class="t" style="left:89.56px;top:120.05px;font-size:15.3px;line-height:15.3px;color:#A8A8A8;transform:scaleX(0.9429);transform-origin:0 0;">Copy</span>
<span class="t" style="left:89.55px;top:149.05px;font-size:15.3px;line-height:15.3px;color:#A8A8A8;transform:scaleX(0.9500);transform-origin:0 0;">Format Painter</span>
<span class="t" style="left:62.60px;top:179.00px;font-size:13px;line-height:13px;color:#2B2B2B;transform:scaleX(1.0472);transform-origin:0 0;">Clipboard</span>
<span class="t" style="left:225.53px;top:133.05px;font-size:15.3px;line-height:15.3px;color:#2B2B2B;transform:scaleX(0.9667);transform-origin:0 0;">New</span>
<span class="t" style="left:216.50px;top:153.05px;font-size:15.3px;line-height:15.3px;color:#2B2B2B;transform:scaleX(1.0000);transform-origin:0 0;">Slide</span>
<span class="t" style="left:294.79px;top:91.05px;font-size:15.3px;line-height:15.3px;color:#2B2B2B;transform:scaleX(0.9556);transform-origin:0 0;">Layout</span>
<span class="t" style="left:294.86px;top:120.05px;font-size:15.3px;line-height:15.3px;color:#2B2B2B;transform:scaleX(0.8910);transform-origin:0 0;">Reset</span>
<span class="t" style="left:294.77px;top:149.05px;font-size:15.3px;line-height:15.3px;color:#2B2B2B;transform:scaleX(0.9796);transform-origin:0 0;">Section</span>
<span class="t" style="left:272.27px;top:179.00px;font-size:13px;line-height:13px;color:#2B2B2B;transform:scaleX(0.9779);transform-origin:0 0;">Slides</span>
<span class="t" style="left:650.20px;top:100.95px;font-size:15.3px;line-height:15.3px;color:#A3A3A3;transform:scaleX(1.0400);transform-origin:0 0;">A</span>
<span class="t" style="left:679.50px;top:103.00px;font-size:13px;line-height:13px;color:#A3A3A3;transform:scaleX(1.1000);transform-origin:0 0;-webkit-text-stroke:0.5px #A3A3A3;">A</span>
<span class="t" style="left:714.60px;top:97.57px;font-size:13.5px;line-height:13.5px;color:#A3A3A3;transform:scaleX(0.8667);transform-origin:0 0;-webkit-text-stroke:0.5px #A3A3A3;">A</span>
<span class="t" style="left:394.68px;top:139.16px;font-size:16px;line-height:16px;color:#A3A3A3;transform:scaleX(0.9200);transform-origin:0 0;font-weight:700;">B</span>
<span class="t" style="left:428.00px;top:138.73px;font-size:16.5px;line-height:16.5px;color:#A3A3A3;transform:scaleX(0.8571);transform-origin:0 0;font-family:'Liberation Serif',serif;font-weight:700;font-style:italic;">I</span>
<span class="t" style="left:454.73px;top:139.05px;font-size:15.3px;line-height:15.3px;color:#A3A3A3;transform:scaleX(1.0667);transform-origin:0 0;font-weight:700;">U</span>
<span class="t" style="left:485.27px;top:139.16px;font-size:16px;line-height:16px;color:#A3A3A3;transform:scaleX(1.0333);transform-origin:0 0;font-weight:700;text-shadow:1.5px 1.5px 1.5px rgba(0,0,0,.3);">S</span>
<span class="t" style="left:510.31px;top:141.27px;font-size:13.5px;line-height:13.5px;color:#A3A3A3;transform:scaleX(0.9850);transform-origin:0 0;">abc</span>
<span class="t" style="left:543.00px;top:137.57px;font-size:13.5px;line-height:13.5px;color:#A3A3A3;transform:scaleX(0.9824);transform-origin:0 0;-webkit-text-stroke:0.3px #A3A3A3;">AV</span>
<span class="t" style="left:590.60px;top:139.30px;font-size:15px;line-height:15px;color:#A3A3A3;transform:scaleX(0.9556);transform-origin:0 0;-webkit-text-stroke:0.3px #A3A3A3;">Aa</span>
<span class="t" style="left:643.52px;top:135.27px;font-size:11.5px;line-height:11.5px;color:#A3A3A3;transform:scaleX(1.0818);transform-origin:0 0;-webkit-text-stroke:0.3px #A3A3A3;">ab</span>
<span class="t" style="left:696.90px;top:135.76px;font-size:18px;line-height:18px;color:#A3A3A3;transform:scaleX(1.0000);transform-origin:0 0;-webkit-text-stroke:0.5px #A3A3A3;">A</span>
<span class="t" style="left:537.26px;top:179.00px;font-size:13px;line-height:13px;color:#2B2B2B;transform:scaleX(0.9900);transform-origin:0 0;">Font</span>
<span class="t" style="left:808.17px;top:96.75px;font-size:7.5px;line-height:7.5px;color:#9A9A9A;transform:scaleX(1.3333);transform-origin:0 0;font-weight:700;">1</span>
<span class="t" style="left:809.50px;top:103.75px;font-size:7.5px;line-height:7.5px;color:#9A9A9A;transform:scaleX(1.0000);transform-origin:0 0;font-weight:700;">2</span>
<span class="t" style="left:808.17px;top:110.65px;font-size:7.5px;line-height:7.5px;color:#9A9A9A;transform:scaleX(1.3333);transform-origin:0 0;font-weight:700;">3</span>
<span class="t" style="left:989.70px;top:87.09px;font-size:11px;line-height:11px;color:#A0A0A0;transform:scaleX(0.9375);transform-origin:0 0;font-weight:700;">A</span>
<span class="t" style="left:1003.50px;top:91.05px;font-size:15.3px;line-height:15.3px;color:#A8A8A8;transform:scaleX(0.9772);transform-origin:0 0;">Text Direction</span>
<span class="t" style="left:1002.80px;top:120.05px;font-size:15.3px;line-height:15.3px;color:#A8A8A8;transform:scaleX(0.9864);transform-origin:0 0;">Align Text</span>
<span class="t" style="left:1001.82px;top:149.05px;font-size:15.3px;line-height:15.3px;color:#A8A8A8;transform:scaleX(0.9791);transform-origin:0 0;">Convert to SmartArt</span>
<span class="t" style="left:913.97px;top:179.00px;font-size:13px;line-height:13px;color:#2B2B2B;transform:scaleX(1.0297);transform-origin:0 0;">Paragraph</span>
<span class="t" style="left:1185.00px;top:96.23px;font-size:8px;line-height:8px;color:#3B78C3;transform:scaleX(0.8833);transform-origin:0 0;font-weight:700;">A</span>
<span class="t" style="left:1216.80px;top:96.23px;font-size:8px;line-height:8px;color:#3B78C3;transform:scaleX(0.8667);transform-origin:0 0;font-weight:700;">A</span>
<span class="t" style="left:1350.30px;top:133.05px;font-size:15.3px;line-height:15.3px;color:#2B2B2B;transform:scaleX(0.9648);transform-origin:0 0;">Arrange</span>
<span class="t" style="left:1415.63px;top:133.05px;font-size:15.3px;line-height:15.3px;color:#A8A8A8;transform:scaleX(0.9737);transform-origin:0 0;">Quick</span>
<span class="t" style="left:1407.99px;top:153.05px;font-size:15.3px;line-height:15.3px;color:#A8A8A8;transform:scaleX(0.9125);transform-origin:0 0;">Styles</span>
<span class="t" style="left:1490.65px;top:91.05px;font-size:15.3px;line-height:15.3px;color:#A8A8A8;transform:scaleX(0.9530);transform-origin:0 0;">Shape Fill</span>
<span class="t" style="left:1490.63px;top:120.05px;font-size:15.3px;line-height:15.3px;color:#A8A8A8;transform:scaleX(0.9684);transform-origin:0 0;">Shape Outline</span>
<span class="t" style="left:1490.65px;top:149.05px;font-size:15.3px;line-height:15.3px;color:#A8A8A8;transform:scaleX(0.9495);transform-origin:0 0;">Shape Effects</span>
<span class="t" style="left:1355.22px;top:179.00px;font-size:13px;line-height:13px;color:#2B2B2B;transform:scaleX(1.0326);transform-origin:0 0;">Drawing</span>
<span class="t" style="left:1651.65px;top:91.05px;font-size:15.3px;line-height:15.3px;color:#2B2B2B;transform:scaleX(0.9500);transform-origin:0 0;">Find</span>
<span class="t" style="left:1628.60px;top:117.27px;font-size:11.5px;line-height:11.5px;color:#444;transform:scaleX(1.0333);transform-origin:0 0;letter-spacing:-0.3px;-webkit-text-stroke:0.35px;">a<span style="color:#8E52B8">b</span></span>
<span class="t" style="left:1636.30px;top:125.87px;font-size:11.5px;line-height:11.5px;color:#444;transform:scaleX(0.9417);transform-origin:0 0;letter-spacing:-0.3px;-webkit-text-stroke:0.35px;">a<span style="color:#8E52B8">c</span></span>
<span class="t" style="left:1651.64px;top:120.05px;font-size:15.3px;line-height:15.3px;color:#2B2B2B;transform:scaleX(0.9611);transform-origin:0 0;">Replace</span>
<span class="t" style="left:1651.67px;top:149.05px;font-size:15.3px;line-height:15.3px;color:#2B2B2B;transform:scaleX(0.9262);transform-origin:0 0;">Select</span>
<span class="t" style="left:1657.37px;top:179.00px;font-size:13px;line-height:13px;color:#2B2B2B;transform:scaleX(1.0263);transform-origin:0 0;">Editing</span>
<span class="t" style="left:49.31px;top:207.05px;font-size:15.3px;line-height:15.3px;color:#3C3C3C;transform:scaleX(0.8933);transform-origin:0 0;">GET GENUINE OFFICE</span>
<span class="t" style="left:208.44px;top:207.05px;font-size:15.3px;line-height:15.3px;color:#3C3C3C;transform:scaleX(0.9589);transform-origin:0 0;">Your license isn't genuine,</span>
<span class="t" style="left:380.52px;top:207.05px;font-size:15.3px;line-height:15.3px;color:#3C3C3C;transform:scaleX(0.9804);transform-origin:0 0;">and you may be a victim</span>
<span class="t" style="left:546.49px;top:207.05px;font-size:15.3px;line-height:15.3px;color:#3C3C3C;transform:scaleX(1.0068);transform-origin:0 0;">of software</span>
<span class="t" style="left:625.24px;top:207.05px;font-size:15.3px;line-height:15.3px;color:#3C3C3C;transform:scaleX(1.0133);transform-origin:0 0;">counterfeiting.</span>
<span class="t" style="left:726.20px;top:207.05px;font-size:15.3px;line-height:15.3px;color:#3C3C3C;transform:scaleX(1.0153);transform-origin:0 0;">Avoid interruption</span>
<span class="t" style="left:850.64px;top:207.05px;font-size:15.3px;line-height:15.3px;color:#3C3C3C;transform:scaleX(0.9573);transform-origin:0 0;">and keep your</span>
<span class="t" style="left:949.70px;top:207.05px;font-size:15.3px;line-height:15.3px;color:#3C3C3C;transform:scaleX(0.9637);transform-origin:0 0;">files safe with</span>
<span class="t" style="left:1041.90px;top:207.05px;font-size:15.3px;line-height:15.3px;color:#3C3C3C;transform:scaleX(1.0050);transform-origin:0 0;">genuine Office today.</span>
<span class="t" style="left:1227.02px;top:207.05px;font-size:15.3px;line-height:15.3px;color:#3C3C3C;transform:scaleX(0.9841);transform-origin:0 0;">Get genuine Office</span>
<span class="t" style="left:1404.53px;top:207.05px;font-size:15.3px;line-height:15.3px;color:#3C3C3C;transform:scaleX(0.9675);transform-origin:0 0;">Learn more</span>
<span class="t" style="left:15.06px;top:253.26px;font-size:18px;line-height:18px;color:#C2462A;transform:scaleX(0.9375);transform-origin:0 0;">1</span>
<span class="t" style="left:8.19px;top:1001.00px;font-size:13px;line-height:13px;color:#333333;transform:scaleX(1.0094);transform-origin:0 0;">Slide 1 of 1</span>
<span class="t" style="left:138.31px;top:1001.00px;font-size:13px;line-height:13px;color:#333333;transform:scaleX(0.9878);transform-origin:0 0;">English (United States)</span>
<span class="t" style="left:312.30px;top:1001.00px;font-size:13px;line-height:13px;color:#333333;transform:scaleX(1.0169);transform-origin:0 0;">Accessibility: Good to go</span>
<span class="t" style="left:1307.57px;top:1001.00px;font-size:13px;line-height:13px;color:#333333;transform:scaleX(1.0273);transform-origin:0 0;">Notes</span>
<span class="t" style="left:1388.60px;top:1001.00px;font-size:13px;line-height:13px;color:#333333;transform:scaleX(0.9951);transform-origin:0 0;">Comments</span>
<span class="t" style="left:1854.78px;top:1001.00px;font-size:13px;line-height:13px;color:#333333;transform:scaleX(0.9240);transform-origin:0 0;">81%</span>
<span class="t" style="left:834.47px;top:529.91px;font-size:75px;line-height:75px;color:#000;transform:scaleX(0.9258);transform-origin:0 0;-webkit-text-stroke:1.7px #fff;">Click</span>
<span class="t" style="left:1002.14px;top:529.91px;font-size:75px;line-height:75px;color:#000;transform:scaleX(1.1304);transform-origin:0 0;-webkit-text-stroke:1.7px #fff;">to</span>
<span class="t" style="left:1089.11px;top:529.91px;font-size:75px;line-height:75px;color:#000;transform:scaleX(0.9730);transform-origin:0 0;-webkit-text-stroke:1.7px #fff;">add</span>
<span class="t" style="left:1229.09px;top:529.91px;font-size:75px;line-height:75px;color:#000;transform:scaleX(1.1054);transform-origin:0 0;-webkit-text-stroke:1.7px #fff;">title</span>
<span class="t" style="left:967.95px;top:635.07px;font-size:28.5px;line-height:28.5px;color:#000;transform:scaleX(0.9525);transform-origin:0 0;">Click</span>
<span class="t" style="left:1035.90px;top:635.07px;font-size:28.5px;line-height:28.5px;color:#000;transform:scaleX(1.1087);transform-origin:0 0;">to</span>
<span class="t" style="left:1069.97px;top:635.07px;font-size:28.5px;line-height:28.5px;color:#000;transform:scaleX(1.0333);transform-origin:0 0;">add</span>
<span class="t" style="left:1126.50px;top:635.07px;font-size:28.5px;line-height:28.5px;color:#000;transform:scaleX(1.0977);transform-origin:0 0;">subtitle</span>
</div>
</body></html>
